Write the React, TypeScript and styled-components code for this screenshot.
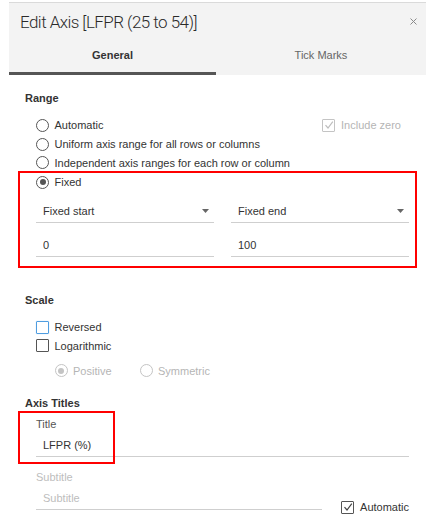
import React from "react";
import styled, { createGlobalStyle } from "styled-components";

const GlobalStyle = createGlobalStyle`
  html, body { margin: 0; padding: 0; background: #fff; }
  body {
    font-family: "Liberation Sans", Arial, sans-serif;
    font-size: 11px;
    color: #333;
  }
  * { box-sizing: border-box; }
`;

const Page = styled.div`
  width: 426px;
  height: 523px;
  overflow: hidden;
  padding: 2px 0 0 9px;
  background: #fff;
`;

const Dialog = styled.div`
  border-top: 1px solid #dadada;
`;

const Header = styled.header`
  background: #f3f3f3;
`;

const TitleRow = styled.div`
  height: 37px;
  display: flex;
  align-items: center;
  justify-content: space-between;
  padding: 0 9px 0 11px;
`;

const DialogTitle = styled.h1`
  margin: 0;
  font-family: Roboto, "Liberation Sans", sans-serif;
  font-weight: 300;
  font-size: 17px;
  line-height: 20px;
  letter-spacing: -0.55px;
  color: #2a2a2a;
`;

const CloseButton = styled.button`
  width: 7px;
  height: 7px;
  padding: 0;
  border: 0;
  background: none;
  display: flex;
  color: #8a8a8a;
  margin-top: -1px;
`;

const Tabs = styled.div`
  display: grid;
  grid-template-columns: 207px 1fr;
`;

const Tab = styled.div<{ $active?: boolean }>`
  height: 35px;
  display: flex;
  align-items: center;
  justify-content: center;
  padding-bottom: 3px;
  border-bottom: 3px solid ${(p) => (p.$active ? "#555" : "transparent")};
  font-weight: ${(p) => (p.$active ? 700 : 400)};
  color: ${(p) => (p.$active ? "#333" : "#666")};
`;

const Body = styled.div`
  padding: 15px 17px 0 16px;
`;

const SectionTitle = styled.div<{ $gap?: number }>`
  font-weight: 700;
  height: 16px;
  line-height: 16px;
  margin-top: ${(p) => p.$gap ?? 0}px;
  color: #333;
`;

const OptionList = styled.div`
  margin-top: 10px;
  padding-left: 11px;
  display: flex;
  flex-direction: column;
`;

const OptionRow = styled.div`
  height: 18.7px;
  display: flex;
  align-items: center;
  justify-content: space-between;
`;

const Option = styled.label<{ $disabled?: boolean }>`
  display: inline-flex;
  align-items: center;
  gap: 5.5px;
  color: ${(p) => (p.$disabled ? "#b5b5b5" : "#333")};
`;

const RadioCircle = styled.span<{ $checked?: boolean; $disabled?: boolean }>`
  width: 13px;
  height: 13px;
  flex: none;
  border-radius: 50%;
  border: 1.5px solid ${(p) => (p.$disabled ? "#c4c4c4" : "#555")};
  display: inline-flex;
  align-items: center;
  justify-content: center;
  &::after {
    content: "";
    display: ${(p) => (p.$checked ? "block" : "none")};
    width: 6px;
    height: 6px;
    border-radius: 50%;
    background: ${(p) => (p.$disabled ? "#c4c4c4" : "#555")};
  }
`;

type BoxTone = "normal" | "focus" | "disabled";
const boxColor = (t: BoxTone) =>
  t === "focus" ? "#4f9de0" : t === "disabled" ? "#c4c4c4" : "#555";

const CheckBox = styled.span<{ $tone: BoxTone }>`
  width: 13px;
  height: 13px;
  flex: none;
  border: 1.5px solid ${(p) => boxColor(p.$tone)};
  border-radius: 1px;
  display: inline-flex;
  align-items: center;
  justify-content: center;
  color: ${(p) => (p.$tone === "disabled" ? "#bdbdbd" : "#444")};
  box-shadow: ${(p) => (p.$tone === "focus" ? "0 0 1px #8cc3f0" : "none")};
`;

const IncludeZero = styled(Option)`
  margin-right: 8px;
  gap: 6px;
`;

const Highlight = styled.div`
  margin: -1px -8px 0 -7px;
  border: 2px solid #ff0000;
  padding: 0 6px 9px 16px;
`;

const FieldGrid = styled.div`
  margin-top: 7px;
  display: grid;
  grid-template-columns: 1fr 1fr;
  column-gap: 17px;
  row-gap: 10px;
`;

const Select = styled.div`
  height: 24px;
  display: flex;
  align-items: center;
  justify-content: space-between;
  padding: 2px 5px 0 7px;
  border-bottom: 1px solid #cfcfcf;
  color: #333;
`;

const TextInput = styled.input`
  display: block;
  width: 100%;
  height: 24px;
  margin: 0;
  padding: 2px 7px 0;
  border: 0;
  border-bottom: 1px solid #cfcfcf;
  background: transparent;
  font: inherit;
  color: #333;
  outline: none;
  &::placeholder {
    color: #bdbdbd;
  }
`;

const SubOptions = styled.div`
  margin-top: 6.3px;
  padding-left: 29.5px;
  height: 18.7px;
  display: flex;
  align-items: center;
  gap: 28px;
`;

const FieldGroup = styled.div<{ $gap: number }>`
  position: relative;
  margin-top: ${(p) => p.$gap}px;
  padding-left: 11px;
`;

const FieldLabel = styled.div<{ $disabled?: boolean }>`
  height: 16px;
  line-height: 16px;
  margin-bottom: 1px;
  color: ${(p) => (p.$disabled ? "#bdbdbd" : "#555")};
`;

const FieldRow = styled.div`
  display: flex;
  gap: 19px;
`;

const FieldCell = styled.div`
  flex: 1;
`;

const AutoOption = styled(Option)`
  align-self: flex-start;
  margin-top: 32px;
  height: 13px;
  gap: 6px;
`;

const Annotation = styled.div`
  position: absolute;
  left: -7px;
  top: -5.2px;
  width: 97px;
  height: 53px;
  border: 2px solid #ff0000;
  pointer-events: none;
`;

const Check = () => (
  <svg width="10" height="10" viewBox="0 0 10 10">
    <polyline points="1.5,5.2 4,8 8.8,1.6" fill="none" stroke="currentColor" strokeWidth="1.2" />
  </svg>
);

const Caret = () => (
  <svg width="7" height="4" viewBox="0 0 7 4">
    <polygon points="0,0 7,0 3.5,4" fill="#666" />
  </svg>
);

const CloseIcon = () => (
  <svg width="7" height="7" viewBox="0 0 7 7">
    <path d="M0.5 0.5 L6.5 6.5 M6.5 0.5 L0.5 6.5" stroke="currentColor" strokeWidth="1" />
  </svg>
);

const Radio = ({ label, checked, disabled }: { label: string; checked?: boolean; disabled?: boolean }) => (
  <Option $disabled={disabled}>
    <RadioCircle $checked={checked} $disabled={disabled} />
    {label}
  </Option>
);

export default function App() {
  return (
    <>
      <GlobalStyle />
      <Page>
        <Dialog>
          <Header>
            <TitleRow>
              <DialogTitle>Edit Axis [LFPR (25 to 54)]</DialogTitle>
              <CloseButton aria-label="Close">
                <CloseIcon />
              </CloseButton>
            </TitleRow>
            <Tabs>
              <Tab $active>General</Tab>
              <Tab>Tick Marks</Tab>
            </Tabs>
          </Header>
          <Body>
            <SectionTitle>Range</SectionTitle>
            <OptionList>
              <OptionRow>
                <Radio label="Automatic" />
                <IncludeZero $disabled>
                  <CheckBox $tone="disabled">
                    <Check />
                  </CheckBox>
                  Include zero
                </IncludeZero>
              </OptionRow>
              <OptionRow>
                <Radio label="Uniform axis range for all rows or columns" />
              </OptionRow>
              <OptionRow>
                <Radio label="Independent axis ranges for each row or column" />
              </OptionRow>
            </OptionList>
            <Highlight>
              <OptionRow>
                <Radio label="Fixed" checked />
              </OptionRow>
              <FieldGrid>
                <Select>
                  Fixed start
                  <Caret />
                </Select>
                <Select>
                  Fixed end
                  <Caret />
                </Select>
                <TextInput defaultValue="0" />
                <TextInput defaultValue="100" />
              </FieldGrid>
            </Highlight>

            <SectionTitle $gap={24}>Scale</SectionTitle>
            <OptionList>
              <OptionRow>
                <Option>
                  <CheckBox $tone="focus" />
                  Reversed
                </Option>
              </OptionRow>
              <OptionRow>
                <Option>
                  <CheckBox $tone="normal" />
                  Logarithmic
                </Option>
              </OptionRow>
            </OptionList>
            <SubOptions>
              <Radio label="Positive" checked disabled />
              <Radio label="Symmetric" disabled />
            </SubOptions>

            <SectionTitle $gap={15}>Axis Titles</SectionTitle>
            <FieldGroup $gap={4.7}>
              <FieldLabel>Title</FieldLabel>
              <TextInput defaultValue="LFPR (%)" />
              <Annotation />
            </FieldGroup>
            <FieldGroup $gap={12}>
              <FieldRow>
                <FieldCell>
                  <FieldLabel $disabled>Subtitle</FieldLabel>
                  <TextInput placeholder="Subtitle" />
                </FieldCell>
                <AutoOption>
                  <CheckBox $tone="normal">
                    <Check />
                  </CheckBox>
                  Automatic
                </AutoOption>
              </FieldRow>
            </FieldGroup>
          </Body>
        </Dialog>
      </Page>
    </>
  );
}
